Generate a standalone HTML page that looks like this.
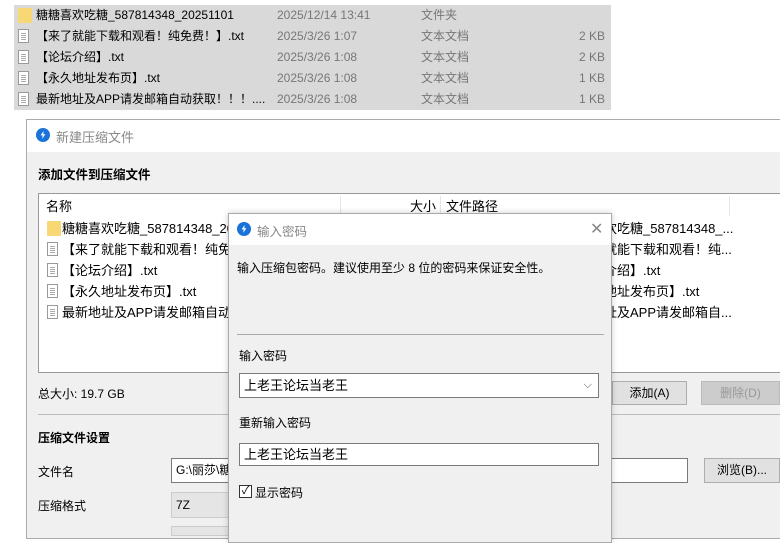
<!DOCTYPE html>
<html><head><meta charset="utf-8"><style>
*{box-sizing:border-box;margin:0;padding:0}
body{width:780px;height:533px;background:#fff;position:relative;overflow:hidden;font-family:"Liberation Sans","Noto Sans CJK SC",sans-serif;font-size:12px;color:#000}
.abs{position:absolute;white-space:nowrap}
.row{position:absolute;left:14px;width:597px;height:21px;background:#d9d9d9;font-size:12px}
.row span{position:absolute;top:0;line-height:21px}
.g{color:#777}
.doc{position:absolute;width:11px;height:14px;border:1px solid #999;background:#fff}
.doc:after{content:"";position:absolute;left:2px;right:2px;top:3px;height:7px;background:repeating-linear-gradient(#aaa 0 1px,transparent 1px 2px)}
.fold{position:absolute;width:14px;height:15px;background:#f8d775;border-radius:1px}
.logo{position:absolute;width:14px;height:14px;border-radius:50%;background:#1a73d9}
.logo:after{content:"";position:absolute;left:4px;top:3px;width:6px;height:8px;background:#fff;clip-path:polygon(60% 0,10% 55%,45% 55%,35% 100%,90% 40%,55% 40%)}
.btn{position:absolute;border:1px solid #adadad;background:#e1e1e1;text-align:center;font-size:12px}
.inp{position:absolute;border:1px solid #7a7a7a;background:#fff;font-size:13px;padding:0 4px}
.lt{position:absolute;white-space:nowrap;font-size:13px;line-height:21px}
</style></head><body>
<div class="row" style="top:5px"><div class="fold" style="left:4px;top:3px"></div><span style="left:22px">糖糖喜欢吃糖_587814348_20251101</span><span class="g" style="left:263px">2025/12/14 13:41</span><span class="g" style="left:407px">文件夹</span></div>
<div class="row" style="top:26px"><div class="doc" style="left:4px;top:3px"></div><span style="left:22px">【来了就能下载和观看！纯免费！】.txt</span><span class="g" style="left:263px">2025/3/26 1:07</span><span class="g" style="left:407px">文本文档</span><span class="g" style="right:6px">2 KB</span></div>
<div class="row" style="top:47px"><div class="doc" style="left:4px;top:3px"></div><span style="left:22px">【论坛介绍】.txt</span><span class="g" style="left:263px">2025/3/26 1:08</span><span class="g" style="left:407px">文本文档</span><span class="g" style="right:6px">2 KB</span></div>
<div class="row" style="top:68px"><div class="doc" style="left:4px;top:3px"></div><span style="left:22px">【永久地址发布页】.txt</span><span class="g" style="left:263px">2025/3/26 1:08</span><span class="g" style="left:407px">文本文档</span><span class="g" style="right:6px">1 KB</span></div>
<div class="row" style="top:89px"><div class="doc" style="left:4px;top:3px"></div><span style="left:22px">最新地址及APP请发邮箱自动获取！！！....</span><span class="g" style="left:263px">2025/3/26 1:08</span><span class="g" style="left:407px">文本文档</span><span class="g" style="right:6px">1 KB</span></div>

<div class="abs" style="left:26px;top:119px;width:760px;height:420px;border:1px solid #aaa;background:#f0f0f0">
 <div style="height:32px;background:#fff"></div>
</div>
<div class="logo" style="left:36px;top:128px"></div>
<div class="abs" style="left:56px;top:127px;font-size:13px;color:#888">新建压缩文件</div>
<div class="abs" style="left:38px;top:164px;font-weight:bold;font-size:12.5px">添加文件到压缩文件</div>
<div class="abs" style="left:38px;top:193px;width:750px;height:180px;border:1px solid #999;background:#fff"></div>
<div class="abs" style="left:340px;top:196px;width:1px;height:20px;background:#e5e5e5"></div>
<div class="abs" style="left:440px;top:196px;width:1px;height:20px;background:#e5e5e5"></div>
<div class="abs" style="left:729px;top:196px;width:1px;height:20px;background:#e5e5e5"></div>
<div class="lt" style="left:46px;top:196px">名称</div>
<div class="lt" style="left:410px;top:196px">大小</div>
<div class="lt" style="left:446px;top:196px">文件路径</div>
<div class="fold" style="left:47px;top:221px"></div><div class="lt" style="left:62px;top:218px">糖糖喜欢吃糖_587814348_202</div>
<div class="doc" style="left:47px;top:242px"></div><div class="lt" style="left:62px;top:239px">【来了就能下载和观看！纯免费</div>
<div class="doc" style="left:47px;top:263px"></div><div class="lt" style="left:62px;top:260px">【论坛介绍】.txt</div>
<div class="doc" style="left:47px;top:284px"></div><div class="lt" style="left:62px;top:281px">【永久地址发布页】.txt</div>
<div class="doc" style="left:47px;top:305px"></div><div class="lt" style="left:62px;top:302px">最新地址及APP请发邮箱自动获</div>
<div class="lt" style="left:604px;top:218px">欢吃糖_587814348_...</div>
<div class="lt" style="left:604px;top:239px">就能下载和观看！纯...</div>
<div class="lt" style="left:604px;top:260px">介绍】.txt</div>
<div class="lt" style="left:604px;top:281px">地址发布页】.txt</div>
<div class="lt" style="left:604px;top:302px">址及APP请发邮箱自...</div>
<div class="abs" style="left:38px;top:385px">总大小: 19.7 GB</div>
<div class="btn" style="left:612px;top:381px;width:75px;height:24px;line-height:22px">添加(A)</div>
<div class="btn" style="left:701px;top:381px;width:79px;height:24px;line-height:22px;color:#999;background:#ccc;border-color:#bbb">删除(D)</div>
<div class="abs" style="left:38px;top:414px;width:750px;height:1px;background:#bbb"></div>
<div class="abs" style="left:38px;top:429px;font-weight:bold">压缩文件设置</div>
<div class="abs" style="left:38px;top:463px">文件名</div>
<div class="inp" style="left:171px;top:458px;width:517px;height:25px;font-size:12px;line-height:23px">G:\丽莎\糖</div>
<div class="btn" style="left:704px;top:458px;width:76px;height:25px;line-height:23px">浏览(B)...</div>
<div class="abs" style="left:38px;top:497px">压缩格式</div>
<div class="abs" style="left:171px;top:492px;width:60px;height:26px;background:#e5e5e5;border:1px solid #ccc;padding:5px 4px">7Z</div>
<div class="abs" style="left:171px;top:526px;width:60px;height:10px;background:#e5e5e5;border:1px solid #ccc"></div>

<div class="abs" style="left:228px;top:213px;width:384px;height:330px;border:1px solid #aaa;background:#f0f0f0;box-shadow:0 0 6px rgba(0,0,0,.2)">
 <div style="height:31px;background:#fff"></div>
</div>
<div class="logo" style="left:237px;top:222px"></div>
<div class="abs" style="left:257px;top:221px;font-size:12.5px;color:#888">输入密码</div>
<div class="abs" style="left:590px;top:219px;font-size:16px;color:#888">✕</div>
<div class="abs" style="left:237px;top:259px">输入压缩包密码。建议使用至少 8 位的密码来保证安全性。</div>
<div class="abs" style="left:237px;top:334px;width:367px;height:1px;background:#aaa"></div>
<div class="abs" style="left:239px;top:347px">输入密码</div>
<div class="inp" style="left:239px;top:373px;width:360px;height:25px;line-height:23px">上老王论坛当老王<span style="position:absolute;right:6px;top:0;font-size:11px;color:#555">⌵</span></div>
<div class="abs" style="left:239px;top:414px">重新输入密码</div>
<div class="inp" style="left:239px;top:443px;width:360px;height:23px;line-height:21px">上老王论坛当老王</div>
<div class="abs" style="left:239px;top:485px;width:13px;height:13px;border:1px solid #333;background:#fff;font-size:11px;line-height:11px;text-align:center">✓</div>
<div class="abs" style="left:255px;top:484px">显示密码</div>
</body></html>
